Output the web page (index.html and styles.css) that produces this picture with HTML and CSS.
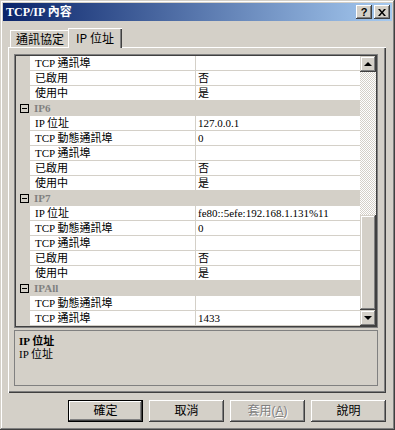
FILE: index.html
```html
<!DOCTYPE html>
<html lang="zh-Hant">
<head>
  <meta charset="UTF-8" />
  <title>TCP/IP 內容</title>
  <link rel="stylesheet" href="styles.css">
</head>
<body>

  <div class="window">
    <div class="titlebar">
      <span class="title">TCP/IP 內容</span>
      <span class="cbtn help">?</span>
      <span class="cbtn close">
        <svg width="8" height="7" viewBox="0 0 8 7"><path d="M0 0h2l2 2.5 2-2.5h2l-3 3.5 3 3.5h-2l-2-2.5-2 2.5h-2l3-3.5z" fill="#000"/></svg>
      </span>
    </div>

    <div class="content">
      <div class="tabs">
        <div class="tab">通訊協定</div>
        <div class="tab active">IP 位址</div>
      </div>

      <div class="panel">
        <div class="grid">
          <div class="rows">
            <div class="row"><span class="gutter"></span><span class="name">TCP 通訊埠</span><span class="val"></span></div>
            <div class="row"><span class="gutter"></span><span class="name">已啟用</span><span class="val">否</span></div>
            <div class="row"><span class="gutter"></span><span class="name">使用中</span><span class="val">是</span></div>
            <div class="row cat"><span class="gutter"><i class="minus"></i></span><span class="cat-name">IP6</span></div>
            <div class="row"><span class="gutter"></span><span class="name">IP 位址</span><span class="val">127.0.0.1</span></div>
            <div class="row"><span class="gutter"></span><span class="name">TCP 動態通訊埠</span><span class="val">0</span></div>
            <div class="row"><span class="gutter"></span><span class="name">TCP 通訊埠</span><span class="val"></span></div>
            <div class="row"><span class="gutter"></span><span class="name">已啟用</span><span class="val">否</span></div>
            <div class="row"><span class="gutter"></span><span class="name">使用中</span><span class="val">是</span></div>
            <div class="row cat"><span class="gutter"><i class="minus"></i></span><span class="cat-name">IP7</span></div>
            <div class="row"><span class="gutter"></span><span class="name">IP 位址</span><span class="val">fe80::5efe:192.168.1.131%11</span></div>
            <div class="row"><span class="gutter"></span><span class="name">TCP 動態通訊埠</span><span class="val">0</span></div>
            <div class="row"><span class="gutter"></span><span class="name">TCP 通訊埠</span><span class="val"></span></div>
            <div class="row"><span class="gutter"></span><span class="name">已啟用</span><span class="val">否</span></div>
            <div class="row"><span class="gutter"></span><span class="name">使用中</span><span class="val">是</span></div>
            <div class="row cat"><span class="gutter"><i class="minus"></i></span><span class="cat-name">IPAll</span></div>
            <div class="row"><span class="gutter"></span><span class="name">TCP 動態通訊埠</span><span class="val"></span></div>
            <div class="row"><span class="gutter"></span><span class="name">TCP 通訊埠</span><span class="val">1433</span></div>
          </div>
          <div class="scrollbar">
            <div class="sbtn"><i class="arrow up"></i></div>
            <div class="track"><div class="thumb"></div></div>
            <div class="sbtn"><i class="arrow down"></i></div>
          </div>
        </div>

        <div class="desc">
          <div class="desc-title">IP 位址</div>
          <div>IP 位址</div>
        </div>
      </div>

      <div class="buttons">
        <button class="btn default">確定</button>
        <button class="btn">取消</button>
        <button class="btn disabled">套用(<u>A</u>)</button>
        <button class="btn">說明</button>
      </div>
    </div>
  </div>

</body>
</html>
```

FILE: styles.css
```css
* {
  box-sizing: border-box;
}
body {
  margin: 0;
  background: #d4d0c8;
  font-family: "Liberation Serif", "Noto Sans CJK TC", serif;
  font-size: 11px;
  color: #000;
}
.window {
  width: 395px;
  height: 430px;
  padding: 3px;
  background: #d4d0c8;
  box-shadow: inset -1px -1px #404040, inset 1px 1px #d4d0c8, inset -2px -2px #808080, inset 2px 2px #fff;
  display: flex;
  flex-direction: column;
}
.titlebar {
  height: 18px;
  display: flex;
  align-items: center;
  padding: 0 2px 0 3px;
  background: linear-gradient(to right, #0a246a, #a6caf0);
  color: #fff;
}
.title {
  flex: 1;
  font-weight: bold;
  font-size: 12px;
  line-height: 18px;
}
.cbtn {
  width: 16px;
  height: 14px;
  background: #d4d0c8;
  box-shadow: inset -1px -1px #404040, inset 1px 1px #fff, inset -2px -2px #808080;
  display: flex;
  align-items: center;
  justify-content: center;
  color: #000;
}
.help {
  font-family: "Liberation Sans", sans-serif;
  font-weight: bold;
  font-size: 11px;
  line-height: 14px;
}
.close {
  margin-left: 2px;
}
.content {
  flex: 1;
  display: flex;
  flex-direction: column;
  padding: 7px 6px 0 5px;
}
.tabs {
  display: flex;
  align-items: flex-end;
  height: 19px;
  padding-left: 2px;
  font-family: "Noto Sans CJK TC", sans-serif;
  font-size: 12px;
}
.tab {
  width: 60px;
  height: 17px;
  line-height: 17px;
  text-align: center;
  box-shadow: inset 1px 1px #fff, inset -1px 0 #404040, inset -2px 0 #808080;
}
.tab.active {
  width: 54px;
  height: 20px;
  line-height: 19px;
  margin: 0 0 -1px -2px;
  background: #d4d0c8;
  position: relative;
  z-index: 1;
}
.panel {
  height: 346px;
  padding: 7px 8px 5px 6px;
  box-shadow: inset 1px 1px #fff, inset -1px -1px #404040, inset -2px -2px #808080;
}
.grid {
  height: 274px;
  padding: 2px;
  display: flex;
  box-shadow: inset 0 0 0 1px #808080, inset 0 0 0 2px #404040;
}
.rows {
  flex: 1;
  background: #d4d0c8;
  overflow: hidden;
}
.row {
  display: flex;
  height: 15px;
  border-bottom: 1px solid #d4d0c8;
  line-height: 14px;
  white-space: nowrap;
}
.gutter {
  width: 14px;
  display: flex;
  align-items: center;
  justify-content: center;
}
.name {
  width: 165px;
  background: #fff;
  padding-left: 5px;
}
.val {
  flex: 1;
  background: #fff;
  border-left: 1px solid #d4d0c8;
  padding-left: 2px;
}
.cat-name {
  padding-left: 4px;
  font-weight: bold;
  color: #808080;
}
.minus {
  width: 9px;
  height: 9px;
  border: 1px solid #000;
  display: flex;
  align-items: center;
  justify-content: center;
  margin-left: 2px;
}
.minus::after {
  content: "";
  width: 5px;
  height: 1px;
  background: #000;
}
.scrollbar {
  width: 16px;
  display: flex;
  flex-direction: column;
}
.sbtn {
  height: 16px;
  background: #d4d0c8;
  box-shadow: inset -1px -1px #404040, inset 1px 1px #d4d0c8, inset -2px -2px #808080, inset 2px 2px #fff;
  display: flex;
  align-items: center;
  justify-content: center;
}
.arrow {
  width: 0;
  height: 0;
  border-left: 4px solid transparent;
  border-right: 4px solid transparent;
}
.arrow.up {
  border-bottom: 4px solid #000;
}
.arrow.down {
  border-top: 4px solid #000;
}
.track {
  flex: 1;
  display: flex;
  flex-direction: column;
  justify-content: flex-end;
  background: repeating-conic-gradient(#fff 0 25%, #d4d0c8 0 50%) 0 0 / 2px 2px;
}
.thumb {
  height: 95px;
  background: #d4d0c8;
  box-shadow: inset -1px -1px #404040, inset 1px 1px #d4d0c8, inset -2px -2px #808080, inset 2px 2px #fff;
}
.desc {
  margin-top: 2px;
  height: 56px;
  border: 1px solid #808080;
  padding: 4px 4px;
  line-height: 13px;
}
.desc-title {
  font-weight: bold;
}
.buttons {
  margin-top: 7px;
  display: flex;
  justify-content: flex-end;
  gap: 6px;
}
.btn {
  width: 75px;
  height: 22px;
  padding: 0;
  border: none;
  background: #d4d0c8;
  box-shadow: inset -1px -1px #404040, inset 1px 1px #fff, inset -2px -2px #808080;
  font-family: "Liberation Sans", "Noto Sans CJK TC", sans-serif;
  font-size: 12px;
  line-height: 20px;
  color: #000;
}
.btn.default {
  border: 1px solid #000;
}
.btn.disabled {
  color: #808080;
  text-shadow: 1px 1px #fff;
}
```
